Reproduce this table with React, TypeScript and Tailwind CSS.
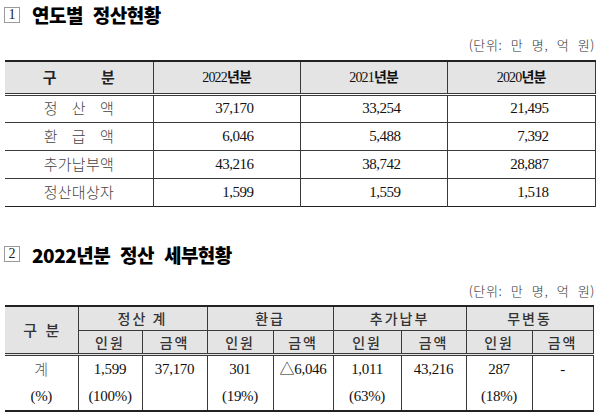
import React from 'react';

const kr = "font-['Noto_Sans_CJK_KR',sans-serif]";
const serif = "font-['Liberation_Serif','Noto_Sans_CJK_KR',serif]";

function Spread({ text, width }: { text: string; width: string }) {
  return (
    <span className={`mx-auto flex justify-between ${width}`}>
      {text.split('').map((c, i) => (
        <span key={i}>{c}</span>
      ))}
    </span>
  );
}

function SectionTitle({ num, children }: { num: string; children: React.ReactNode }) {
  return (
    <div className="flex items-center gap-[12px] pl-[4px]">
      <span className={`flex h-[16px] w-[16px] items-center justify-center border border-[#9a9a9a] text-[14px] leading-none text-[#222] ${serif}`}>
        {num}
      </span>
      <h2 className={`text-[19px] font-black leading-none tracking-[-0.5px] [word-spacing:6px] text-black ${kr}`}>{children}</h2>
    </div>
  );
}

function Unit() {
  return (
    <div className={`pr-[5px] text-right text-[13px] leading-none text-[#333] ${kr} font-light tracking-[0.6px] [word-spacing:5px]`}>
      (단위: 만 명, 억 원)
    </div>
  );
}

const yearly = [
  { label: '정산액', v: ['37,170', '33,254', '21,495'] },
  { label: '환급액', v: ['6,046', '5,488', '7,392'] },
  { label: '추가납부액', v: ['43,216', '38,742', '28,887'] },
  { label: '정산대상자', v: ['1,599', '1,559', '1,518'] },
];

function YearTable() {
  const cell = 'border-r border-[#3a3a3a]';
  return (
    <table className="ml-[5px] w-[590px] table-fixed border-collapse border-t-2 border-b-[1.5px] border-[#222]">
      <colgroup>
        <col className="w-[148px]" />
        <col className="w-[147px]" />
        <col className="w-[147px]" />
        <col className="w-[148px]" />
      </colgroup>
      <thead>
        <tr className="h-[33px] border-b-[3px] border-double border-[#3a3a3a] bg-[#e4e4e4]">
          <th className={`${cell} text-[15px] font-bold text-[#222] ${kr}`}>
            <Spread text="구분" width="w-[72px]" />
          </th>
          {['2022', '2021', '2020'].map((y) => (
            <th key={y} className={`${cell} text-[14px] font-normal text-[#111]`}>
              <span className={`${serif} tracking-[-0.8px]`}>{y}</span>
              <span className={`${kr} font-bold tracking-[-1px]`}>년분</span>
            </th>
          ))}
        </tr>
      </thead>
      <tbody>
        {yearly.map((r, i) => (
          <tr key={r.label} className={`h-[28px] ${i < yearly.length - 1 ? 'border-b border-[#3a3a3a]' : ''}`}>
            <td className={`${cell} text-[15px] font-light text-[#444] ${kr}`}>
              <Spread text={r.label} width="w-[70px]" />
            </td>
            {r.v.map((v, j) => (
              <td key={j} className={`${cell} pr-[46px] text-right text-[15px] text-[#111] ${serif} tracking-[-0.5px]`}>
                {v}
              </td>
            ))}
          </tr>
        ))}
      </tbody>
    </table>
  );
}

function DetailTable() {
  const line = 'border-r border-[#3a3a3a]';
  const head = `${line} text-[14px] font-medium text-[#333] ${kr} tracking-[2px]`;
  const num = `${line} text-center text-[15px] text-[#111] ${serif} tracking-[-0.3px]`;
  const row1 = ['1,599', '37,170', '301', '△6,046', '1,011', '43,216', '287', '-'];
  const row2 = ['(100%)', '', '(19%)', '', '(63%)', '', '(18%)', ''];
  return (
    <table className="ml-[5px] w-[588px] table-fixed border-collapse border-t-2 border-b-2 border-[#222]">
      <colgroup>
        {[73, 64, 65, 66, 60, 68, 65, 66, 61].map((w, i) => (
          <col key={i} style={{ width: w }} />
        ))}
      </colgroup>
      <thead className="bg-[#e4e4e4]">
        <tr className="h-[25px] border-b border-[#3a3a3a]">
          <th rowSpan={2} className={`${line} border-b-[3px] border-double text-[15px] font-medium text-[#333] ${kr}`}>
            <Spread text="구분" width="w-[36px]" />
          </th>
          <th colSpan={2} className={head}>정산 계</th>
          <th colSpan={2} className={head}>환급</th>
          <th colSpan={2} className={head}>추가납부</th>
          <th colSpan={2} className={head}>무변동</th>
        </tr>
        <tr className="h-[24px] border-b-[3px] border-double border-[#3a3a3a]">
          {['인원', '금액', '인원', '금액', '인원', '금액', '인원', '금액'].map((t, i) => (
            <th key={i} className={head}>{t}</th>
          ))}
        </tr>
      </thead>
      <tbody>
        <tr className="h-[28px]">
          <td className={`${line} text-center text-[15px] font-light text-[#555] ${kr}`}>계</td>
          {row1.map((v, i) => (
            <td key={i} className={num}>{v}</td>
          ))}
        </tr>
        <tr className="h-[28px]">
          <td className={num}>(%)</td>
          {row2.map((v, i) => (
            <td key={i} className={num}>{v}</td>
          ))}
        </tr>
      </tbody>
    </table>
  );
}

export default function App() {
  return (
    <div className="h-[417px] w-[600px] overflow-hidden bg-white">
      <div className="pt-[5px]">
        <SectionTitle num="1">연도별 정산현황</SectionTitle>
      </div>
      <div className="mt-[14px]">
        <Unit />
      </div>
      <div className="mt-[9px]">
        <YearTable />
      </div>
      <div className="mt-[38px]">
        <SectionTitle num="2">2022년분 정산 세부현황</SectionTitle>
      </div>
      <div className="mt-[20px]">
        <Unit />
      </div>
      <div className="mt-[8px]">
        <DetailTable />
      </div>
    </div>
  );
}
